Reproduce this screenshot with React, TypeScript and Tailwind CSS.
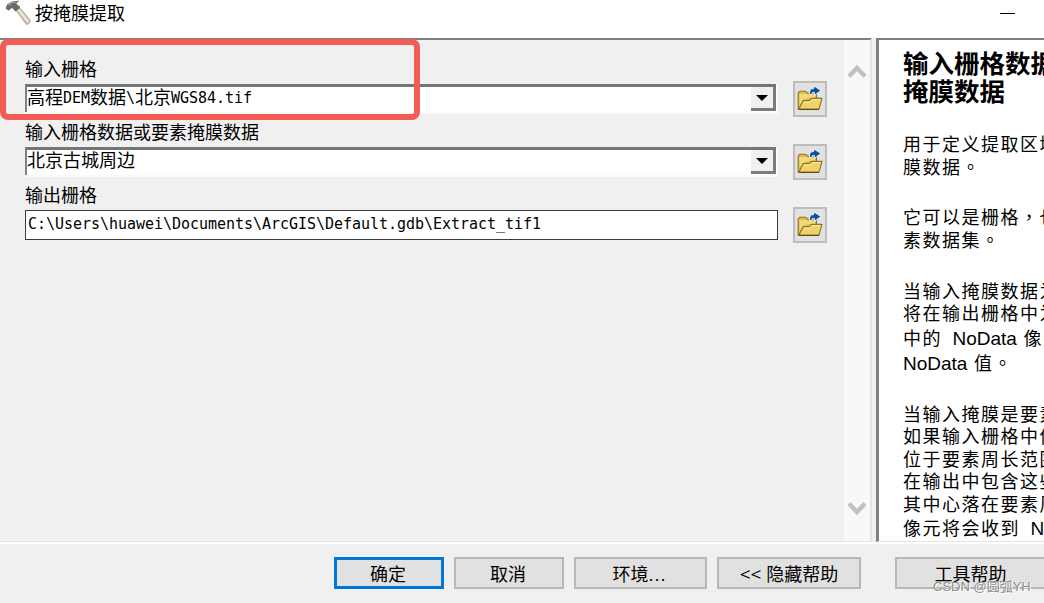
import { useState } from "react";
import type { ReactNode } from "react";

const CJK = "font-['Liberation_Sans','Noto_Sans_CJK_SC',sans-serif]";

// Help panel lines, grouped by paragraph. Lines with latin words are a bit taller.
const HELP = [
  { gap: "h-[28px]", lines: ["用于定义提取区域时使用的掩", "膜数据。"] },
  { gap: "h-[28.5px]", lines: ["它可以是栅格，也可以是要", "素数据集。"] },
  { gap: "h-[27px]", lines: ["当输入掩膜数据为栅格时，", "将在输出栅格中为输入掩膜", "中的 NoData 像元分配", "NoData 值。"] },
  { gap: "h-0", lines: ["当输入掩膜是要素数据时，", "如果输入栅格中像元的中心", "位于要素周长范围内，则会", "在输出中包含这些像元；如", "其中心落在要素周长之外，", "像元将会收到 NoData。"] },
];

function HammerIcon() {
  return (
    <svg width="26" height="26" viewBox="0 0 26 26" className="shrink-0">
      <path d="M10.5 9.5 L14 7 L25 20 Q25.5 23.5 21.5 24.5 Z" fill="#d6cab6" stroke="#958d82" strokeWidth="0.8" />
      <path d="M13.5 10 L23 21.5" stroke="#f5eee0" strokeWidth="1.6" />
      <path d="M1 8.5 L2.5 4.5 Q7 0.8 13.5 1.2 Q10.5 2.6 11 4 L15 7.2 L10.5 11.2 L7.5 7.8 Q5.5 7.2 4 10.2 Z" fill="#6a6a6a" stroke="#505050" strokeWidth="0.6" />
      <path d="M3.5 5 Q7 2.2 11 2" stroke="#a9a9a9" strokeWidth="1.2" fill="none" />
    </svg>
  );
}

function FolderIcon() {
  return (
    <svg width="26" height="26" viewBox="0 0 26 26">
      <path d="M1.2 23 V7 L2.8 5.2 H8.6 L10.4 7 H19.5 V13 L6 20 Z" fill="#e0bb4d" stroke="#8f7220" strokeWidth="1.1" />
      <path d="M2.5 8 H9.5 L11 9 H18 V12 H11 L6 14 L2.5 19 Z" fill="#f3d979" />
      <path d="M1.8 23.2 L6.2 14.6 H12.5 L14.6 12.4 H25 L22 23.2 Z" fill="#efd26a" stroke="#8f7220" strokeWidth="1.1" strokeLinejoin="round" />
      <path d="M7.2 16 H13 L15.2 13.7 H23.4" stroke="#fdf0ae" strokeWidth="1" fill="none" />
      <path d="M1.8 23.4 H22" stroke="#5e4a12" strokeWidth="1.2" />
      <path d="M12.4 8.4 Q12 2.4 16.6 2.6 V-0.2 L24 4.4 L17.4 9.4 V6.6 Q14.6 5.6 14.8 8.8 Z" fill="#0b5299" stroke="#eef4fa" strokeWidth="1" />
    </svg>
  );
}

function BrowseButton() {
  return (
    <button className="flex h-[36px] w-[34px] shrink-0 items-center justify-center border-2 border-[#bdbdbd] bg-[#e1e1e1]">
      <FolderIcon />
    </button>
  );
}

function Combo({ children }: { children: ReactNode }) {
  return (
    <div className="flex h-[30px] w-[753px] border-r-2 border-b-2 border-[#fafafa]">
      <div className="flex w-full border-t-[3px] border-l-2 border-t-[#757575] border-l-[#808080] bg-white">
        <div className="flex grow items-start text-[18px] leading-[22px] whitespace-nowrap">{children}</div>
        <div className="flex h-[24px] w-[25px] shrink-0 items-center justify-center border-r-[3px] border-b-[3px] border-[#7b7b7b] bg-[#f0f0f0]">
          <svg width="12" height="6" viewBox="0 0 12 6">
            <path d="M0 0 H12 L6 6 Z" fill="#000" />
          </svg>
        </div>
      </div>
    </div>
  );
}

function Field({ label, children }: { label: string; children: ReactNode }) {
  return (
    <div className="h-[63px] w-[802px]">
      <div className="h-[22px] text-[18px] leading-[22px]">{label}</div>
      <div className="flex h-[36px] justify-between">{children}</div>
    </div>
  );
}

// Half-width characters, each half as wide as a CJK one
function Mono({ children }: { children: string }) {
  return <span className="font-['DejaVu_Sans_Mono',monospace] text-[15px] tracking-[-0.03px]">{children}</span>;
}

function PushButton({ className, children }: { className: string; children: ReactNode }) {
  return (
    <button className={`flex h-[32px] shrink-0 items-center justify-center bg-[#e1e1e1] pt-[3px] text-[18px] leading-none whitespace-pre ${className}`}>
      {children}
    </button>
  );
}

function HelpLine({ line }: { line: string }) {
  const latin = line.includes("NoData");
  return (
    <div className={`text-[18px] tracking-[1.5px] ${latin ? "h-[25.5px] leading-[26px]" : "h-[22.5px] leading-[22.5px]"}`}>
      {line.split(/(NoData|[，。])/).map((t, i) => {
        if (t === "NoData") {
          return <span key={i} className={`text-[19px] leading-[0] tracking-normal ${line.startsWith(t) ? "" : "ml-[4px]"}`}>{t}</span>;
        }
        // full-width punctuation sits in the middle of its cell
        if (t === "，" || t === "。") {
          return <span key={i} lang="zh-TW" className="font-['Noto_Sans_CJK_TC',sans-serif] leading-[0]">{t}</span>;
        }
        return t;
      })}
    </div>
  );
}

export default function App() {
  const [output] = useState("C:\\Users\\huawei\\Documents\\ArcGIS\\Default.gdb\\Extract_tif1");

  return (
    <div className={`relative flex h-[603px] w-[1044px] flex-col overflow-hidden bg-[#f0f0f0] text-black ${CJK}`}>
      {/* Title bar */}
      <div className="flex h-[38px] shrink-0 items-start justify-between bg-white">
        <div className="flex pl-[5px]">
          <HammerIcon />
          <span className="pl-[4px] text-[18px] leading-[28px]">按掩膜提取</span>
        </div>
        <div className="mt-[13px] mr-[29px] h-px w-[15px] bg-black" />
      </div>

      <div className="flex h-[504px] shrink-0">
        {/* Parameters */}
        <div className="flex w-[872px] shrink-0 justify-between border-t-2 border-r-2 border-b border-t-[#808080] border-r-[#e4e4e4] border-b-[#e4e4e4]">
          <div className="pt-[19px] pl-[25px]">
            <Field label="输入栅格">
              <div className="pt-[3px]">
                <Combo>高程<Mono>DEM</Mono>数据<Mono>\</Mono>北京<Mono>WGS84.tif</Mono></Combo>
              </div>
              <BrowseButton />
            </Field>
            <Field label="输入栅格数据或要素掩膜数据">
              <div className="pt-[3px]">
                <Combo>北京古城周边</Combo>
              </div>
              <BrowseButton />
            </Field>
            <Field label="输出栅格">
              <div className="mt-[3px] h-[30px] w-[753px] border-[1.5px] border-[#3a3a3a] bg-white pl-[2px] leading-[26px] whitespace-nowrap">
                <Mono>{output}</Mono>
              </div>
              <BrowseButton />
            </Field>
          </div>
          <div className="flex w-[26px] flex-col items-center justify-between bg-[#f8f8f8] pt-[24px] pb-[25px]">
            <svg width="18" height="15" viewBox="0 0 18 15">
              <path d="M1 12.5 L9 4 L17 12.5" fill="none" stroke="#c1c1c1" strokeWidth="4.5" />
            </svg>
            <svg width="18" height="15" viewBox="0 0 18 15">
              <path d="M1 2.5 L9 11 L17 2.5" fill="none" stroke="#c1c1c1" strokeWidth="4.5" />
            </svg>
          </div>
        </div>

        {/* Help */}
        <div className="ml-[4px] w-[168px] shrink-0 overflow-hidden border-t-2 border-b border-l-[3px] border-t-[#808080] border-b-[#e4e4e4] border-l-[#808080] bg-white pt-[11px] pl-[24px] whitespace-nowrap">
          <h2 className="h-[83px] text-[25.5px] leading-[27.5px] font-bold">
            输入栅格数据或要素<br />掩膜数据
          </h2>
          {HELP.map((p) => (
            <div key={p.lines[0]}>
              {p.lines.map((line) => <HelpLine key={line} line={line} />)}
              <div className={p.gap} />
            </div>
          ))}
        </div>
      </div>

      {/* Buttons */}
      <div className="flex h-[61px] shrink-0 border-t-2 border-white pt-[13px] pl-[334px]">
        <PushButton className="w-[110px] border-[3px] border-[#0078d7] pr-[2px]">确定</PushButton>
        <PushButton className="ml-[10px] w-[110px] border-2 border-[#b8b8b8] pr-[2px]">取消</PushButton>
        <PushButton className="ml-[10px] w-[133px] border-2 border-[#b8b8b8] pr-[2px]">
          环境<span className="tracking-[1px]">...</span>
        </PushButton>
        <PushButton className="ml-[10px] w-[144px] border-2 border-[#b8b8b8]">
          <span className="mr-[5px] font-['Open_Sans',sans-serif] text-[19px]">&lt;&lt;</span>隐藏帮助
        </PushButton>
        <PushButton className="ml-[34px] w-[151px] border-2 border-[#b8b8b8]">工具帮助</PushButton>
      </div>

      {/* Annotation frame and watermark over the dialog */}
      <div className="absolute top-[39px] left-0 h-[81px] w-[420px] rounded-[8px] border-[6px] border-[#f25c54]" />
      <div className="absolute top-[578px] left-[933px] text-[13px] leading-[18px] whitespace-nowrap text-[#8f8f8f] [text-shadow:1px_1px_0_#fff]">
        CSDN @圆弧YH
      </div>
    </div>
  );
}
